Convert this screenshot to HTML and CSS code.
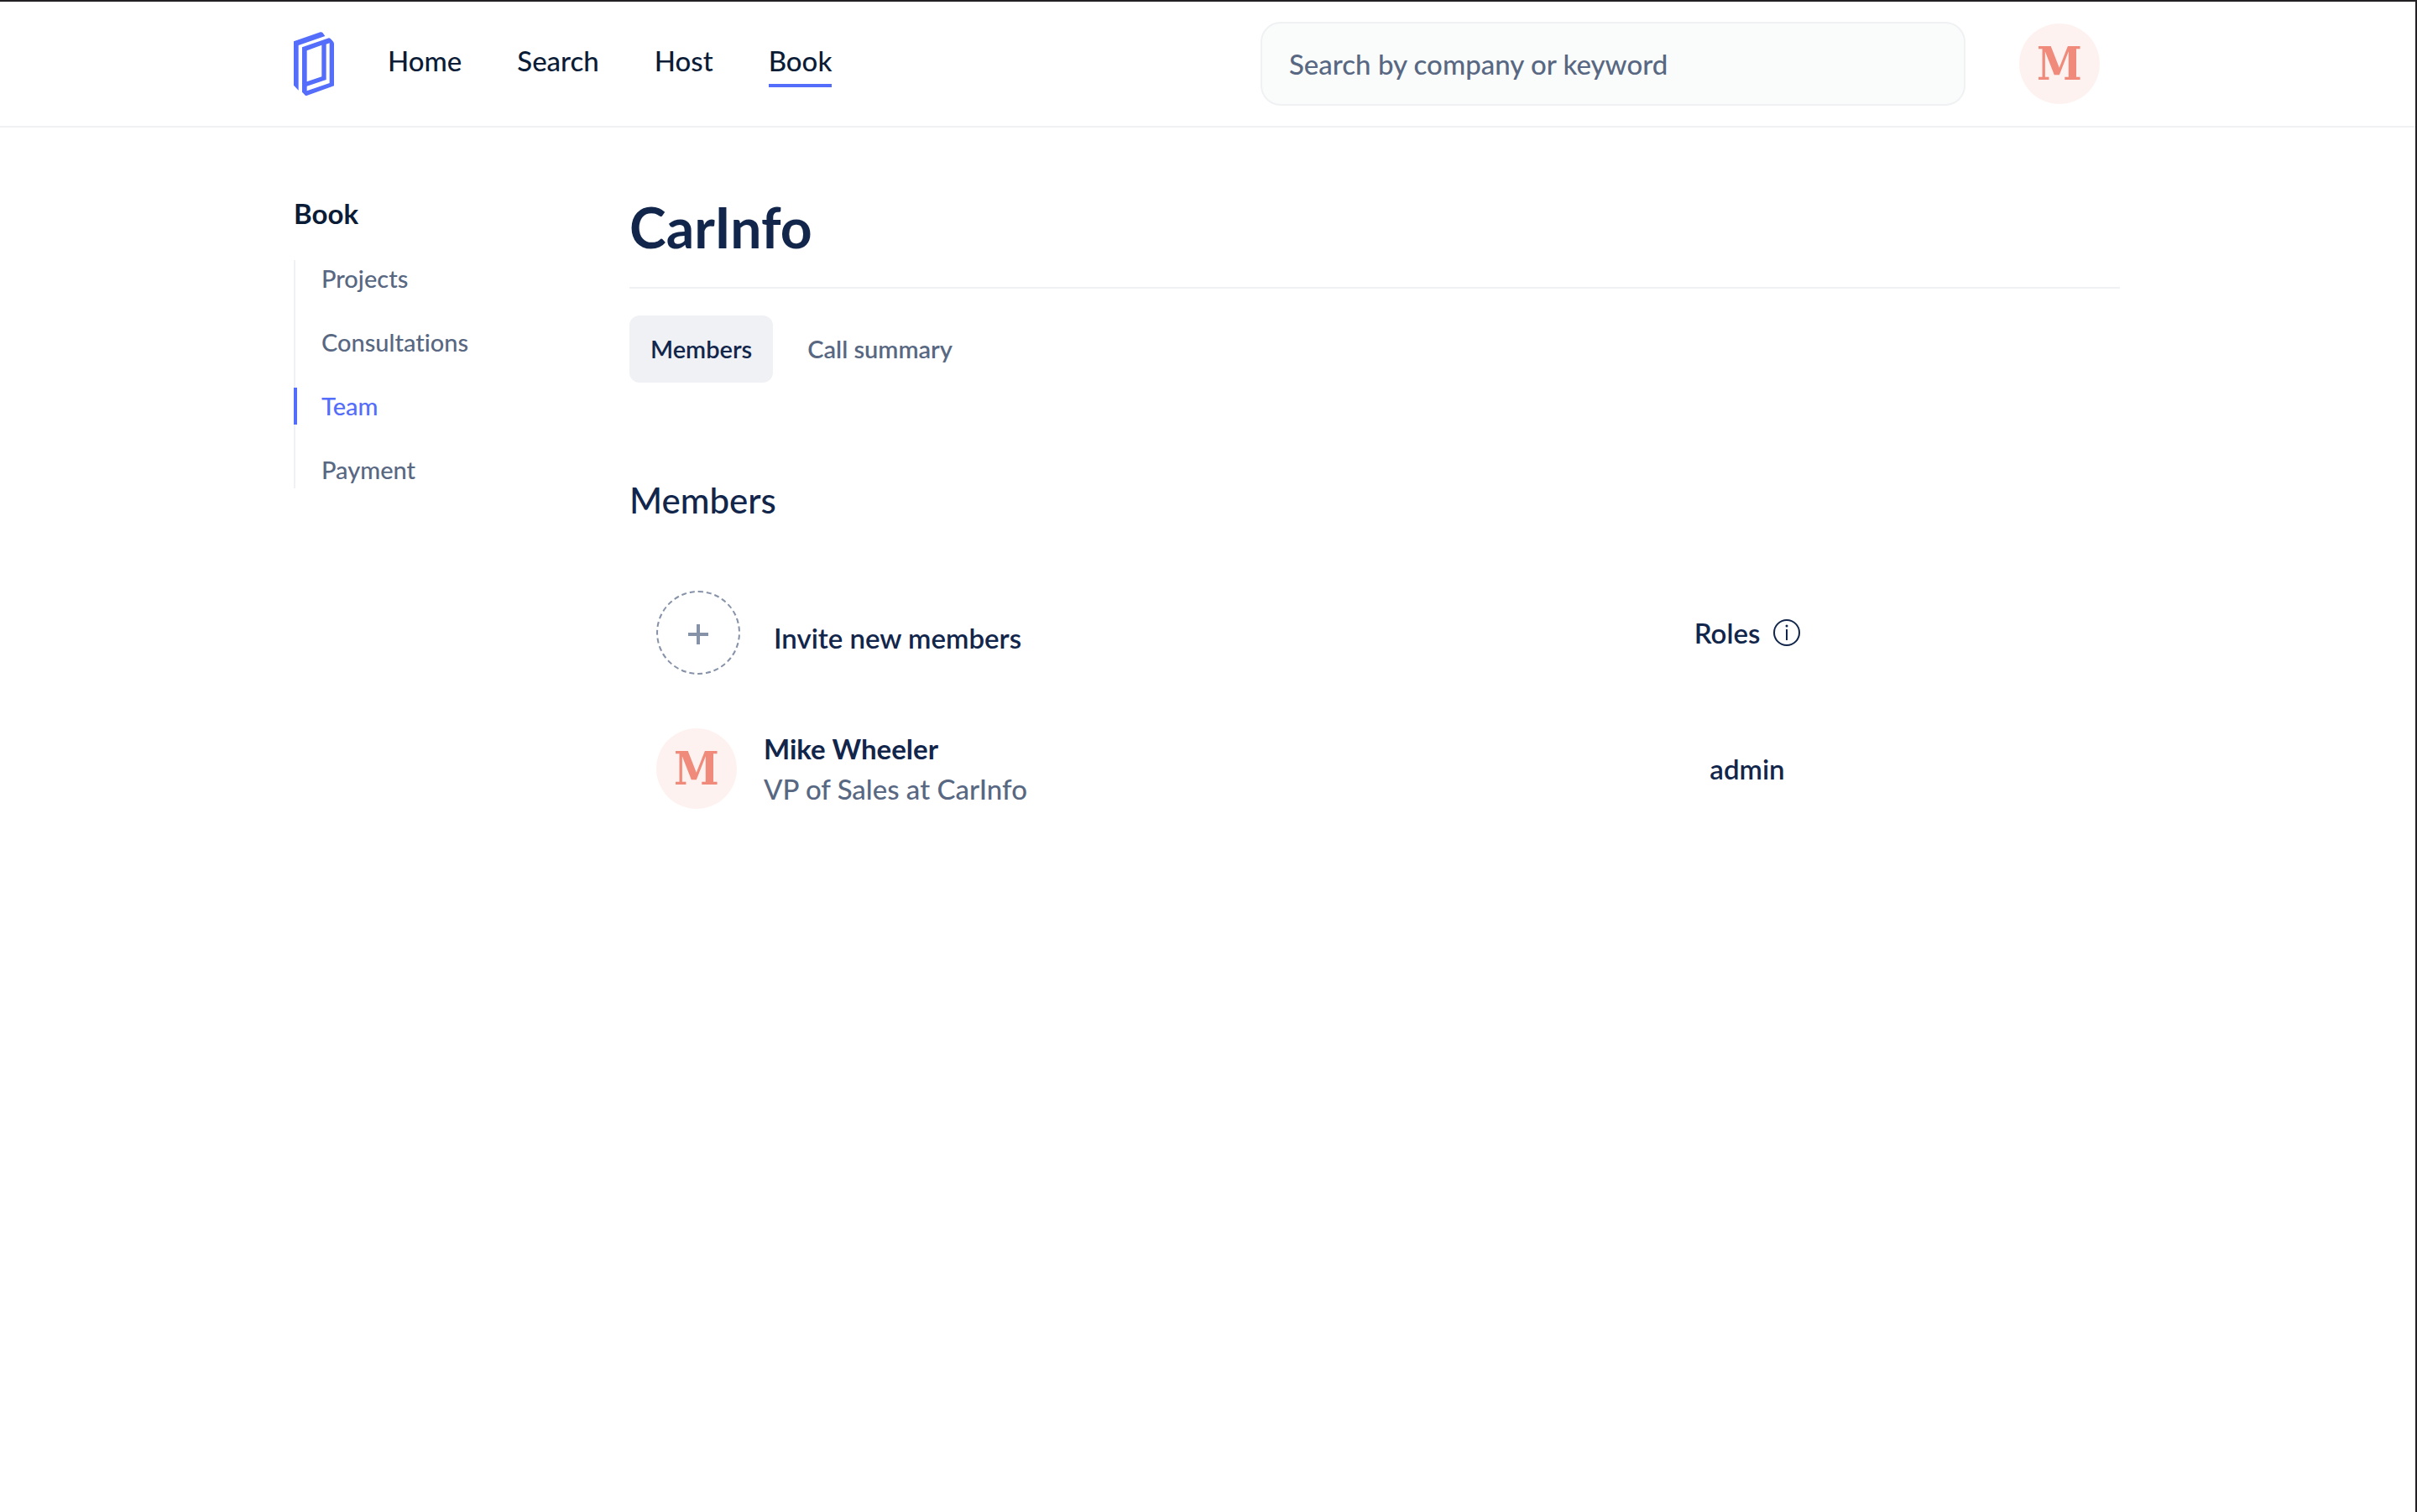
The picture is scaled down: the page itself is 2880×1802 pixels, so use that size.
FILE: index.html
```html
<!DOCTYPE html>
<html lang="en">
<head>
<meta charset="utf-8">
<meta name="viewport" content="width=device-width, initial-scale=1">
<title>CarInfo – Members</title>
<link rel="stylesheet" href="styles.css">
</head>
<body>
<div class="page">
  <header class="topbar">
    <div class="container topbar-inner">
      <a class="logo" href="#" aria-label="Homepage">
        <svg viewBox="30 23 144 228" width="48" height="76" aria-hidden="true">
          <path fill="#546dfa" d="M30 57 L125 24 Q130 22 134 27 L142 38 L47 71 V232 L30 214 Z"/>
          <path fill="#546dfa" fill-rule="evenodd" d="M60 78 L151 46 Q157 43 161 47 L169 55 Q174 60 174 66 V216 L76 251 Q73 252 70 249 L60 238 Z M77 90 V201 L130 183 V70 Z M146 67 V194 L77 217 V234 L158 206 V63 Z"/>
        </svg>
      </a>
      <nav class="nav" aria-label="Main">
        <a class="nav-link" href="#">Home</a>
        <a class="nav-link" href="#">Search</a>
        <a class="nav-link" href="#">Host</a>
        <a class="nav-link is-active" href="#" aria-current="page">Book</a>
      </nav>
      <input class="search" type="search" placeholder="Search by company or keyword" aria-label="Search by company or keyword">
      <button class="avatar" type="button">M</button>
    </div>
  </header>

  <div class="container layout">
    <aside class="sidebar">
      <h2 class="sidebar-title">Book</h2>
      <ul class="side-list">
        <li><a class="side-link" href="#">Projects</a></li>
        <li><a class="side-link" href="#">Consultations</a></li>
        <li><a class="side-link is-active" href="#" aria-current="page">Team</a></li>
        <li><a class="side-link" href="#">Payment</a></li>
      </ul>
    </aside>

    <main class="main">
      <h1 class="title">CarInfo</h1>
      <div class="tabs">
        <button class="tab is-active" type="button">Members</button>
        <button class="tab" type="button">Call summary</button>
      </div>

      <h2 class="section-title">Members</h2>
      <div class="row">
        <button class="invite" type="button">
          <span class="invite-circle">
            <svg viewBox="0 0 24 24" width="24" height="24" aria-hidden="true"><path d="M12 0V24M0 12H24" stroke="#8592a8" stroke-width="4"/></svg>
          </span>
          <span class="invite-label">Invite new members</span>
        </button>
        <div class="role">
          Roles
          <svg viewBox="0 0 32 32" width="32" height="32" role="img" aria-label="About roles">
            <circle cx="16" cy="16" r="15" fill="none" stroke="#12264b" stroke-width="2"/>
            <path d="M16 12V25" stroke="#12264b" stroke-width="2"/>
            <circle cx="16" cy="8" r="1.5" fill="#12264b"/>
          </svg>
        </div>
      </div>
      <div class="row">
        <div class="member">
          <span class="avatar">M</span>
          <div>
            <div class="member-name">Mike Wheeler</div>
            <div class="member-job">VP of Sales at CarInfo</div>
          </div>
        </div>
        <div class="role">admin</div>
      </div>
    </main>
  </div>
</div>
</body>
</html>
```
FILE: styles.css
```css
* {
  box-sizing: border-box;
}

body {
  margin: 0;
  background: #fff;
  color: #12264b;
  font-family: Lato, "Noto Sans", sans-serif;
  font-size: 33px;
  font-weight: 500;
  line-height: 40px;
  font-variant-ligatures: none;
}

h1, h2, ul {
  margin: 0;
  padding: 0;
}

a {
  color: inherit;
  text-decoration: none;
}

button {
  border: 0;
  padding: 0;
  background: none;
  color: inherit;
  font: inherit;
  cursor: pointer;
}

svg {
  display: block;
}

.page {
  min-height: 100vh;
  border-top: 2px solid #222023;
  border-right: 2px solid #222023;
}

.container {
  width: 100%;
  max-width: 2306px;
  margin: 0 auto;
  padding: 0 66px 0 64px;
}

.topbar {
  border-bottom: 2px solid #f0f1f2;
}

.topbar-inner {
  display: flex;
  align-items: center;
  height: 148px;
  padding-right: 90px;
}

.nav {
  display: flex;
  gap: 66px;
  margin-left: 64px;
  color: #0b1c37;
}

.nav-link {
  padding: 4px 0 8px;
  border-bottom: 4px solid transparent;
}

.nav-link.is-active {
  border-bottom-color: #546dfa;
}

.search {
  width: 840px;
  height: 100px;
  margin: 0 64px 0 auto;
  padding: 0 32px;
  border: 2px solid #eff1f3;
  border-radius: 24px;
  background: #fafbfb;
  color: inherit;
  font: inherit;
  appearance: none;
}

.search::placeholder {
  color: #586882;
  opacity: 1;
}

.avatar {
  display: flex;
  flex: none;
  align-items: center;
  justify-content: center;
  width: 96px;
  height: 96px;
  border-radius: 50%;
  background: #fef2f0;
  color: #f08a7b;
  font: bold 54px/96px "DejaVu Serif Condensed", "DejaVu Serif", serif;
}

.layout {
  display: grid;
  grid-template-columns: 336px minmax(0, 1fr);
  column-gap: 64px;
  padding-top: 82px;
}

.sidebar-title {
  margin-bottom: 36px;
  color: #0b1c37;
  font-size: 33px;
  font-weight: 700;
}

.side-list {
  display: grid;
  gap: 32px;
  box-shadow: inset 2px 0 #f0f1f2;
  list-style: none;
}

.side-link {
  display: block;
  padding-left: 29px;
  border-left: 4px solid transparent;
  color: #586882;
  font-size: 29px;
  line-height: 44px;
}

.side-link.is-active {
  border-left-color: #546dfa;
  color: #546dfa;
}

.title {
  padding-bottom: 34px;
  border-bottom: 2px solid #f0f1f2;
  font-size: 66px;
  font-weight: 700;
  line-height: 74px;
}

.tabs {
  display: flex;
  gap: 16px;
  margin-top: 32px;
}

.tab {
  height: 80px;
  padding: 0 25px;
  border-radius: 12px;
  color: #586882;
  font-size: 29px;
  font-weight: 600;
}

.tab.is-active {
  background: #f0f1f4;
  color: #12264b;
}

.section-title {
  margin: 116px 0 84px;
  font-size: 42px;
  font-weight: 500;
  line-height: 48px;
}

.row {
  display: grid;
  grid-template-columns: 1fr 1fr;
  align-items: center;
  margin-bottom: 64px;
}

.invite,
.member {
  display: flex;
  align-items: center;
  padding-left: 32px;
  text-align: left;
}

.invite {
  gap: 40px;
  font-weight: 600;
}

.invite-circle {
  display: flex;
  align-items: center;
  justify-content: center;
  width: 100px;
  height: 100px;
  padding-top: 4px;
  border: 2px dashed #8592a8;
  border-radius: 50%;
}

.invite-label {
  padding-top: 12px;
}

.member {
  gap: 32px;
  line-height: 48px;
}

.member-name {
  font-weight: 700;
}

.member-job {
  color: #586882;
}

.role {
  display: flex;
  align-items: center;
  justify-content: center;
  gap: 16px;
  font-weight: 600;
}
```
